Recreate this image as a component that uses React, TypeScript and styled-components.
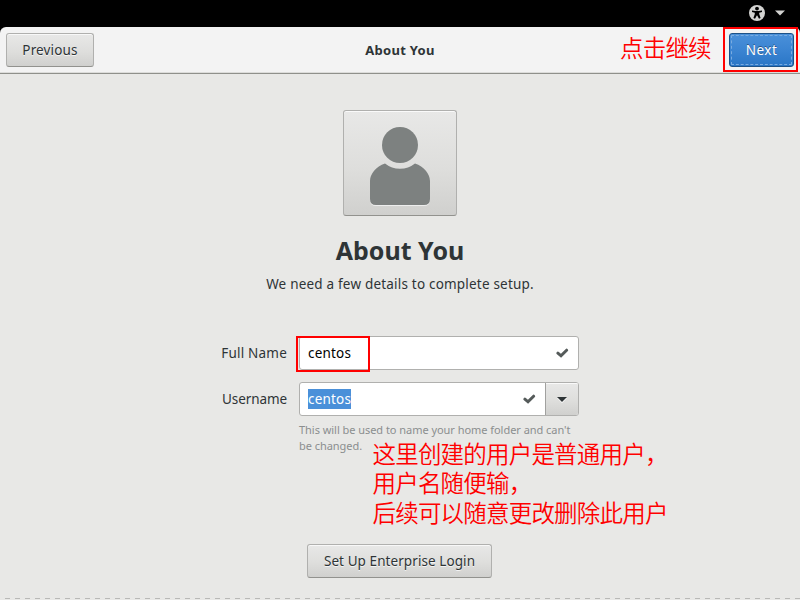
import React from "react";
import styled, { createGlobalStyle, css } from "styled-components";

const GlobalStyle = createGlobalStyle`
  * { box-sizing: border-box; }
  body {
    margin: 0;
    background: #000;
    overflow: hidden;
    font-family: "Noto Sans", "Noto Sans CJK SC", sans-serif;
    font-size: 13.5px;
    letter-spacing: 0.2px;
    color: #2e3436;
  }
`;

const Screen = styled.div`
  position: relative;
  width: 800px;
  height: 600px;
  display: flex;
  flex-direction: column;
  overflow: hidden;
  background: #000;
`;

const TopBar = styled.div`
  height: 27px;
  flex: none;
  display: flex;
  align-items: center;
  justify-content: flex-end;
  gap: 10px;
  padding: 0 15px 1px 0;
`;

const HeaderBar = styled.header`
  height: 47px;
  flex: none;
  display: grid;
  grid-template-columns: 1fr auto 1fr;
  align-items: center;
  padding: 0 6px;
  background: #f3f3f3;
  border-bottom: 1px solid #8f908b;
  box-shadow: inset 0 -1px #dcdcda;
  border-radius: 6px 6px 0 0;
`;

const HeaderTitle = styled.h1`
  margin: 0;
  font-size: 13px;
  font-weight: 700;
  letter-spacing: 0.3px;
`;

const Button = styled.button<{ $width: number; $primary?: boolean; $spacing?: number }>`
  width: ${(p) => p.$width}px;
  height: 34px;
  padding: 0 0 1px;
  border: 1px solid #b0b0ae;
  border-bottom-color: #92928e;
  border-radius: 3px;
  background: linear-gradient(#e8e8e7, #dededc 55%, #d0d0ce);
  box-shadow: inset 0 1px #f8f8f8;
  color: #2e3436;
  text-shadow: 0 1px rgba(255, 255, 255, 0.75);
  font: inherit;
  letter-spacing: ${(p) => p.$spacing ?? 0.15}px;
  white-space: nowrap;
  ${(p) =>
    p.$primary &&
    css`
      justify-self: end;
      border-color: #1c5187;
      background: linear-gradient(#4a90d9, #3b84d2 50%, #2a76c6);
      box-shadow: none;
      outline: 1px dashed #79abe0;
      outline-offset: -3px;
      color: #fff;
      text-shadow: 0 -1px rgba(0, 0, 0, 0.4);
    `}
`;

const Page = styled.main`
  flex: 1;
  display: flex;
  flex-direction: column;
  align-items: center;
  padding-top: 36px;
  background: #e8e8e6;
`;

const AvatarButton = styled.div`
  width: 114px;
  height: 106px;
  flex: none;
  border: 1px solid #b0b0ae;
  border-bottom-color: #92928e;
  border-radius: 3px;
  background: linear-gradient(#e8e8e7, #dededc 55%, #d0d0ce);
  box-shadow: inset 0 1px #fafafa;
  svg { display: block; }
`;

const PageTitle = styled.h2`
  margin: 16px 0 0;
  font-size: 25px;
  line-height: 36px;
  font-weight: 700;
  letter-spacing: 0;
`;

const Subtitle = styled.p`
  margin: 6px 0 0;
  line-height: 20px;
`;

const Form = styled.div`
  width: 358px;
  margin: 42px 0 0 221px;
  display: grid;
  grid-template-columns: 66px 280px;
  column-gap: 12px;
  row-gap: 12px;
  align-items: center;
  align-self: flex-start;
`;

const Label = styled.label<{ $spacing: number }>`
  justify-self: end;
  letter-spacing: ${(p) => p.$spacing}px;
  white-space: nowrap;
`;

const Entry = styled.div`
  height: 34px;
  display: flex;
  align-items: stretch;
  border: 1px solid #b0b0ae;
  border-radius: 3px;
  background: #fff;
  color: #000;
  overflow: hidden;
`;

const EntryValue = styled.div`
  flex: 1;
  display: flex;
  align-items: center;
  padding: 0 9px 0 8px;
  svg { margin-left: auto; }
`;

const Selection = styled.span`
  height: 20px;
  line-height: 20px;
  background: #4a90d9;
  color: #fff;
`;

const Dropdown = styled.div`
  width: 33px;
  display: flex;
  align-items: center;
  justify-content: center;
  border-left: 1px solid #a1a19f;
  background: linear-gradient(#e8e8e7, #dededc 55%, #d0d0ce);
  box-shadow: inset 0 1px #fafafa;
  svg { margin-top: 2px; }
`;

const Hint = styled.p`
  grid-column: 2;
  margin: -6px 0 0;
  height: 32px;
  font-size: 11px;
  line-height: 16px;
  letter-spacing: -0.04px;
  color: #8b8e8f;
  white-space: nowrap;
`;

const LoginRow = styled.div`
  margin-top: 90px;
  margin-left: -1px;
`;

const DashedEdge = styled.div`
  align-self: stretch;
  height: 1px;
  margin-top: 20px;
  background: repeating-linear-gradient(90deg, transparent 0 5px, #b9b9b7 5px 10px);
`;

const RedBox = styled.div<{ $x: number; $y: number; $w: number; $h: number }>`
  position: absolute;
  left: ${(p) => p.$x}px;
  top: ${(p) => p.$y}px;
  width: ${(p) => p.$w}px;
  height: ${(p) => p.$h}px;
  border: 2px solid #f00;
`;

const RedNote = styled.div<{ $x: number; $y: number }>`
  position: absolute;
  left: ${(p) => p.$x}px;
  top: ${(p) => p.$y}px;
  color: #f00;
  font-family: "Noto Sans CJK SC", sans-serif;
  font-size: 23.5px;
  font-weight: 350;
  line-height: 29.4px;
  letter-spacing: -0.8px;
  white-space: nowrap;
`;

const Check = () => (
  <svg width="13" height="12" viewBox="0 0 13 12">
    <path d="M1.9 6.2 L5 8.8 L10.6 3.2" fill="none" stroke="#555b5a" strokeWidth="3" strokeLinecap="round" />
  </svg>
);

export default function App() {
  return (
    <>
      <GlobalStyle />
      <Screen>
        <TopBar>
          <svg width="16" height="16" viewBox="0 0 16 16">
            <circle cx="8" cy="8" r="8" fill="#d3d3d1" />
            <circle cx="8" cy="3.6" r="1.9" fill="#000" />
            <path d="M3 5.4 L6.5 6 H9.5 L13 5.4 V7 L10.2 7.7 V9 L11.6 13 L10 13.7 L8.2 10.4 H7.8 L6 13.7 L4.4 13 L5.8 9 V7.7 L3 7 Z" fill="#000" />
          </svg>
          <svg width="10" height="6" viewBox="0 0 10 6">
            <path d="M0 .5 H10 L5 5.5 Z" fill="#d3d3d1" />
          </svg>
        </TopBar>
        <HeaderBar>
          <Button $width={88}>Previous</Button>
          <HeaderTitle>About You</HeaderTitle>
          <Button $width={65} $primary $spacing={0.5}>Next</Button>
        </HeaderBar>
        <Page>
          <AvatarButton>
            <svg width="112" height="104" viewBox="344 111 112 104">
              <g fill="#fff" opacity=".6" transform="translate(0 1)">
                <path d="M385 163.5 A24 24 0 0 0 415 163.5 C424 166.5 430 174 430 181 V199 Q430 205 424 205 H376 Q370 205 370 199 V181 C370 174 376 166.5 385 163.5 Z" />
              </g>
              <g fill="#7d8180">
                <circle cx="400" cy="145" r="18" />
                <path d="M385 163.5 A24 24 0 0 0 415 163.5 C424 166.5 430 174 430 181 V199 Q430 205 424 205 H376 Q370 205 370 199 V181 C370 174 376 166.5 385 163.5 Z" />
              </g>
            </svg>
          </AvatarButton>
          <PageTitle>About You</PageTitle>
          <Subtitle>We need a few details to complete setup.</Subtitle>
          <Form>
            <Label $spacing={0.2}>Full Name</Label>
            <Entry>
              <EntryValue>centos<Check /></EntryValue>
            </Entry>
            <Label $spacing={-0.08}>Username</Label>
            <Entry>
              <EntryValue><Selection>centos</Selection><Check /></EntryValue>
              <Dropdown>
                <svg width="10" height="6" viewBox="0 0 10 6">
                  <path d="M0 1 H10 L5 6 Z" fill="#fff" />
                  <path d="M0 0 H10 L5 5 Z" fill="#2e3436" />
                </svg>
              </Dropdown>
            </Entry>
            <Hint>
              This will be used to name your home folder and can't
              <br />
              be changed.
            </Hint>
          </Form>
          <LoginRow>
            <Button $width={185} $spacing={0.08}>Set Up Enterprise Login</Button>
          </LoginRow>
          <DashedEdge />
        </Page>
        <RedBox $x={723} $y={27} $w={75} $h={45} />
        <RedBox $x={296} $y={336} $w={74} $h={36} />
        <RedNote $x={620} $y={33}>点击继续</RedNote>
        <RedNote $x={372.5} $y={439}>
          这里创建的用户是普通用户，
          <br />
          用户名随便输，
          <br />
          后续可以随意更改删除此用户
        </RedNote>
      </Screen>
    </>
  );
}
